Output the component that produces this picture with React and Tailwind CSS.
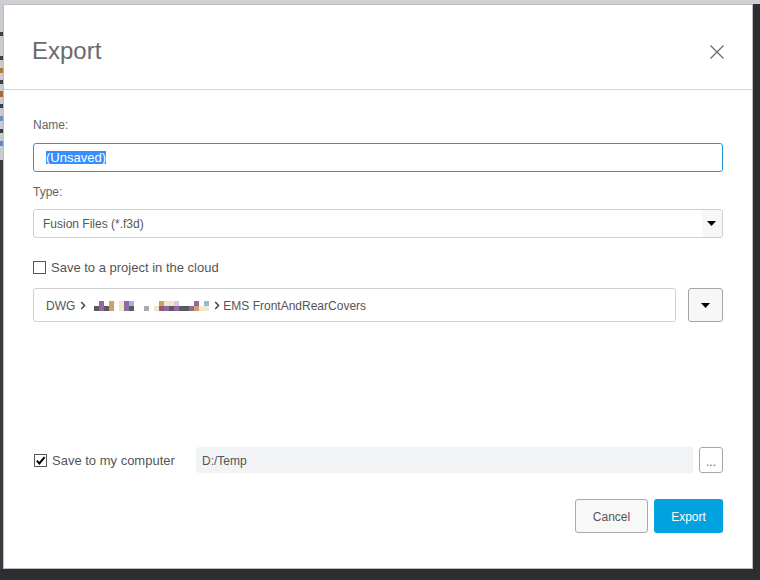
import React from 'react';

// colour blocks used by the masked folder names in the breadcrumb
const swatch = {
  P: 'bg-[#8e6a9e]',
  D: 'bg-[#5b5860]',
  T: 'bg-[#c9a06e]',
  C: 'bg-[#f4e7c8]',
  B: 'bg-[#8dbbe3]',
  G: 'bg-[#aaaaaa]',
  R: 'bg-[#9a5b63]',
  L: 'bg-[#d9c6e2]',
  '.': 'bg-transparent',
};

const maskTop = '.P.T.CPB.....TCCL...P.B';
const maskBottom = 'DPDT.CPD..G.CRPDPDDPTCC';

function Mask() {
  return (
    <span className="flex flex-col pt-[1px]">
      {[maskTop, maskBottom].map((row, r) => (
        <span key={r} className="flex">
          {row.split('').map((c, i) => (
            <span key={i} className={`w-[5px] h-[5px] ${swatch[c]}`} />
          ))}
        </span>
      ))}
    </span>
  );
}

function Chevron() {
  return (
    <svg width="6" height="9" viewBox="0 0 6 9" className="shrink-0">
      <path d="M1.2 1l3.4 3.5L1.2 8" fill="none" stroke="#444" strokeWidth="1.5" />
    </svg>
  );
}

function Caret() {
  return (
    <svg width="9" height="5" viewBox="0 0 9 5">
      <path d="M0 0h9L4.5 5z" fill="#000" />
    </svg>
  );
}

function Checkbox({ checked }) {
  return (
    <span className="w-[13px] h-[13px] border border-[#555] bg-white flex items-center justify-center shrink-0">
      {checked && (
        <svg width="11" height="11" viewBox="0 0 11 11">
          <path d="M1.8 5.6l2.6 2.8L9.6 2.2" fill="none" stroke="#000" strokeWidth="2" />
        </svg>
      )}
    </span>
  );
}

function SideStrip() {
  // sliver of the app window peeking out behind the dialog
  return (
    <div className="w-[3px] flex flex-col">
      <div className="h-[156px] bg-[#c9cbcf] flex flex-col">
        <div className="h-[28px]" />
        <div className="h-[4px] bg-[#3b3e43]" />
        <div className="h-[20px]" />
        <div className="h-[4px] bg-[#3b3e43]" />
        <div className="h-[8px]" />
        <div className="h-[5px] bg-[#b07a3e]" />
        <div className="h-[7px]" />
        <div className="h-[4px] bg-[#3b3e43]" />
        <div className="h-[7px]" />
        <div className="h-[6px] bg-[#a86a3a]" />
        <div className="h-[7px]" />
        <div className="h-[4px] bg-[#3b3e43]" />
        <div className="h-[8px]" />
        <div className="h-[5px] bg-[#6f8fbf]" />
        <div className="h-[8px]" />
        <div className="h-[4px] bg-[#3b3e43]" />
        <div className="h-[8px]" />
        <div className="h-[5px] bg-[#5f86c0]" />
      </div>
      <div className="flex-1 bg-[#3a3d42]" />
    </div>
  );
}

export default function App() {
  return (
    <div className="w-[760px] h-[580px] bg-[#2c2e32] flex flex-col font-['Liberation_Sans',Arial,sans-serif]">
      <div className="h-[4px] bg-[#cdd0d4] shrink-0" />

      <div className="flex">
        <SideStrip />

        <div className="w-[750px] h-[565px] bg-white border border-[#bdbdbd] flex flex-col">
          {/* Header */}
          <div className="h-[85px] border-b border-[#d6d6d6] flex justify-between items-start pl-[28px] pr-[28px] pt-[32px] shrink-0">
            <h1 className="text-[24px] leading-[28px] text-[#6a6a6a]">Export</h1>
            <button className="mt-[8px] w-[14px] h-[14px]">
              <svg width="14" height="14" viewBox="0 0 14 14">
                <path d="M0.5 0.5l13 13M13.5 0.5l-13 13" stroke="#6b6b6b" strokeWidth="1.3" />
              </svg>
            </button>
          </div>

          {/* Body */}
          <div className="flex flex-col px-[29px] pt-[28px]">
            <label className="text-[12px] leading-[14px] text-[#666]">Name:</label>
            <div className="mt-[11px] h-[29px] border border-[#1f9bd7] rounded-[3px] flex items-center pl-[12px]">
              <span className="inline-block h-[13px] leading-[13px] text-[13px] bg-[#3390ff] text-white">(Unsaved)</span>
            </div>

            <label className="mt-[13px] text-[12px] leading-[14px] text-[#666]">Type:</label>
            <div className="mt-[10px] h-[29px] border border-[#cfcfcf] rounded-[3px] flex items-stretch">
              <span className="flex-1 flex items-center pl-[9px] pt-[1px] text-[12px] text-[#555]">Fusion Files (*.f3d)</span>
              <span className="w-[20px] bg-[#f7f7f7] rounded-r-[3px] flex items-center justify-center pr-[1px]">
                <Caret />
              </span>
            </div>

            <div className="mt-[22px] h-[15px] flex items-center gap-[5px]">
              <Checkbox />
              <span className="text-[13px] text-[#555]">Save to a project in the cloud</span>
            </div>

            <div className="mt-[13px] flex gap-[12px]">
              <div className="flex-1 h-[34px] border border-[#d0d0d0] rounded-[3px] flex items-center pl-[12px] pt-[1px] text-[12px] text-[#555]">
                <span>DWG</span>
                <span className="ml-[5px]"><Chevron /></span>
                <span className="ml-[8px]"><Mask /></span>
                <span className="ml-[5px]"><Chevron /></span>
                <span className="ml-[3px]">EMS FrontAndRearCovers</span>
              </div>
              <button className="w-[35px] h-[34px] border border-[#a5a5a5] bg-[#f7f7f7] rounded-[3px] flex items-center justify-center">
                <Caret />
              </button>
            </div>

            <div className="mt-[125px] h-[26px] flex items-center gap-[6px]">
              <div className="w-[157px] flex items-center gap-[5px] pl-[1px] pt-[1px]">
                <Checkbox checked />
                <span className="text-[13px] text-[#555]">Save to my computer</span>
              </div>
              <div className="flex-1 h-[26px] bg-[#f2f3f5] rounded-[3px] flex items-center pl-[6px] pt-[1px] text-[12px] text-[#555]">
                D:/Temp
              </div>
              <button className="w-[24px] h-[26px] border border-[#a8a8a8] bg-white rounded-[3px] text-[12px] text-[#666] leading-none pt-[4px]">
                ...
              </button>
            </div>

            <div className="mt-[26px] flex justify-end gap-[6px]">
              <button className="w-[73px] h-[34px] border border-[#a9a9a9] bg-[#f8f8f8] rounded-[3px] text-[12px] text-[#555] pt-[1px]">
                Cancel
              </button>
              <button className="w-[69px] h-[34px] bg-[#00a3e0] rounded-[3px] text-[12px] text-white pt-[1px]">
                Export
              </button>
            </div>
          </div>
        </div>
      </div>
    </div>
  );
}
